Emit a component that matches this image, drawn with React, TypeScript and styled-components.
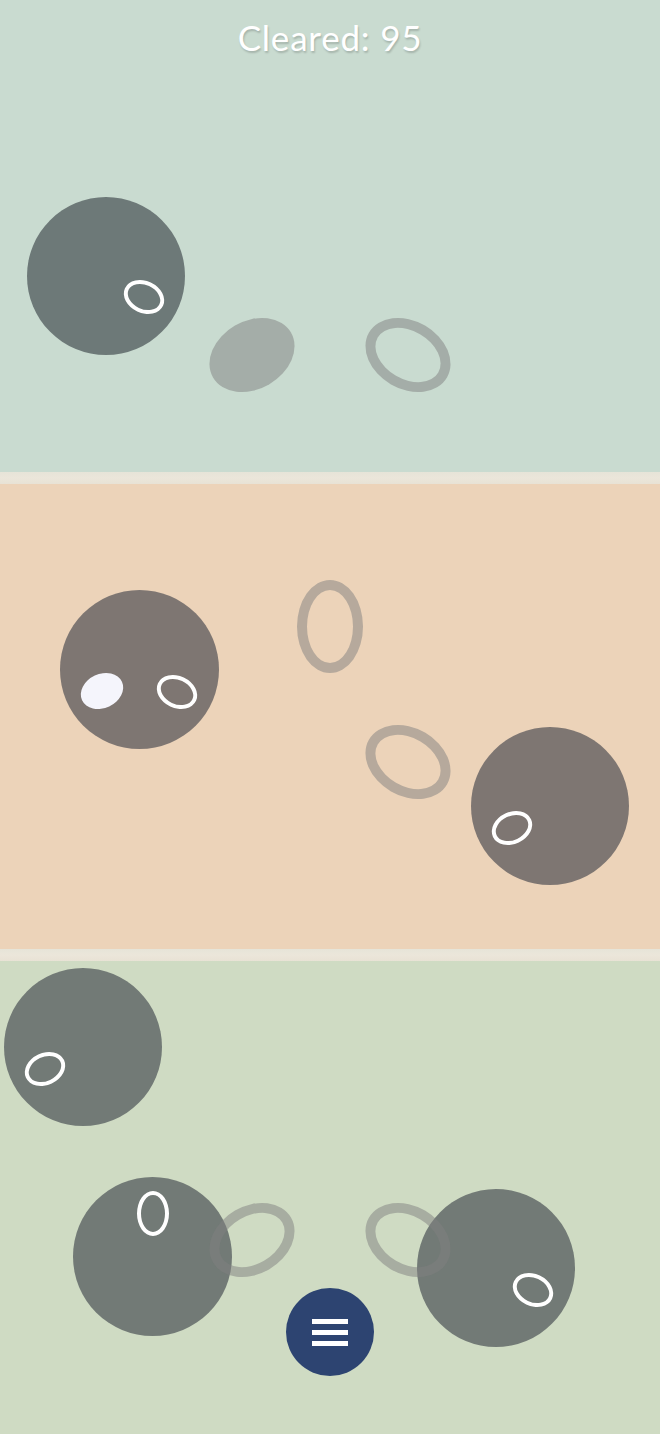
import styled, { createGlobalStyle } from "styled-components"

const GlobalStyle = createGlobalStyle`
  html, body {
    margin: 0;
    padding: 0;
  }
  body {
    font-family: "Lato", "Open Sans", sans-serif;
    overflow: hidden;
  }
`

const Page = styled.div`
  display: flex;
  flex-direction: column;
  width: 100vw;
  height: 100vh;
`

const Panel = styled.div<{ $bg: string; $h: number }>`
  position: relative;
  display: flex;
  flex-direction: column;
  align-items: center;
  height: ${(p) => p.$h}px;
  flex-shrink: 0;
  background-color: ${(p) => p.$bg};
  overflow: hidden;
`

const Divider = styled.div`
  height: 12px;
  flex-shrink: 0;
  background: linear-gradient(#e6e4d8, #ebe6da 50%, #e8e2d5);
`

const Title = styled.h1`
  position: relative;
  z-index: 2;
  margin: 16px 0 0;
  font-family: "Lato", "Open Sans", sans-serif;
  font-weight: 400;
  font-size: 35px;
  line-height: 1.2;
  letter-spacing: 0.8px;
  color: #ffffff;
  text-shadow: 1px 2px 2px rgba(0, 0, 0, 0.18);
`

// a shape on the game canvas, placed by its centre
const Shape = styled.div<{
  $x: number
  $y: number
  $w: number
  $h: number
  $rot?: number
  $fill?: string
  $stroke?: string
  $sw?: number
}>`
  position: absolute;
  box-sizing: border-box;
  left: ${(p) => p.$x - p.$w / 2}px;
  top: ${(p) => p.$y - p.$h / 2}px;
  width: ${(p) => p.$w}px;
  height: ${(p) => p.$h}px;
  border-radius: 50%;
  transform: rotate(${(p) => p.$rot ?? 0}deg);
  background: ${(p) => p.$fill ?? "transparent"};
  border: ${(p) => (p.$stroke ? `${p.$sw ?? 4}px solid ${p.$stroke}` : "none")};
`

const MenuButton = styled.button`
  position: relative;
  z-index: 2;
  margin-top: auto;
  margin-bottom: 58px;
  width: 88px;
  height: 88px;
  border-radius: 50%;
  border: none;
  padding: 0;
  background-color: #2d4471;
  display: flex;
  flex-direction: column;
  align-items: center;
  justify-content: center;
  gap: 6px;
  cursor: pointer;
`

const MenuLine = styled.span`
  display: block;
  width: 36px;
  height: 5px;
  background-color: #ffffff;
`

const GRAY = "rgba(128, 128, 128, 0.5)"
const WHITE = "#ffffff"

type Item = {
  x: number
  y: number
  w: number
  h: number
  rot?: number
  fill?: string
  stroke?: string
  sw?: number
}

const topItems: Item[] = [
  { x: 106, y: 276, w: 158, h: 158, fill: "#6d7978" },
  { x: 252, y: 355, w: 90, h: 68, rot: -30, fill: "rgba(128, 128, 128, 0.5)" },
  { x: 408, y: 355, w: 90, h: 68, rot: 30, stroke: GRAY, sw: 10 },
  { x: 144, y: 297, w: 42, h: 32, rot: 25, stroke: WHITE, sw: 4 },
]

const middleItems: Item[] = [
  { x: 139.5, y: 185.5, w: 159, h: 159, fill: "#7e7672" },
  { x: 550, y: 322, w: 158, h: 158, fill: "#7e7672" },
  { x: 102, y: 207, w: 44, h: 34, rot: -25, fill: "#f5f5fc" },
  { x: 177, y: 207.5, w: 42, h: 32, rot: 25, stroke: WHITE, sw: 4 },
  { x: 330, y: 142.5, w: 66, h: 93, stroke: GRAY, sw: 10 },
  { x: 408, y: 278, w: 90, h: 68, rot: 30, stroke: GRAY, sw: 10 },
  { x: 512, y: 344, w: 42, h: 32, rot: -25, stroke: WHITE, sw: 4 },
]

const bottomItems: Item[] = [
  { x: 83, y: 86, w: 158, h: 158, fill: "#727a76" },
  { x: 152.5, y: 295.5, w: 159, h: 159, fill: "#727a76" },
  { x: 496, y: 306.5, w: 158, h: 158, fill: "#727a76" },
  { x: 45, y: 108, w: 42, h: 32, rot: -25, stroke: WHITE, sw: 4 },
  { x: 153, y: 252.5, w: 32, h: 45, stroke: WHITE, sw: 4 },
  { x: 252, y: 279, w: 90, h: 68, rot: -30, stroke: GRAY, sw: 10 },
  { x: 408, y: 279, w: 90, h: 68, rot: 30, stroke: GRAY, sw: 10 },
  { x: 533, y: 328.5, w: 42, h: 32, rot: 25, stroke: WHITE, sw: 4 },
]

function Shapes({ items }: { items: Item[] }) {
  return (
    <>
      {items.map((s, i) => (
        <Shape
          key={i}
          $x={s.x}
          $y={s.y}
          $w={s.w}
          $h={s.h}
          $rot={s.rot}
          $fill={s.fill}
          $stroke={s.stroke}
          $sw={s.sw}
        />
      ))}
    </>
  )
}

function App() {
  return (
    <Page>
      <GlobalStyle />
      <Panel $bg="#c9dbd0" $h={472}>
        <Title>Cleared: 95</Title>
        <Shapes items={topItems} />
      </Panel>
      <Divider />
      <Panel $bg="#ecd3b9" $h={465}>
        <Shapes items={middleItems} />
      </Panel>
      <Divider />
      <Panel $bg="#cfdbc3" $h={473}>
        <Shapes items={bottomItems} />
        <MenuButton aria-label="Menu">
          <MenuLine />
          <MenuLine />
          <MenuLine />
        </MenuButton>
      </Panel>
    </Page>
  )
}

export default App
